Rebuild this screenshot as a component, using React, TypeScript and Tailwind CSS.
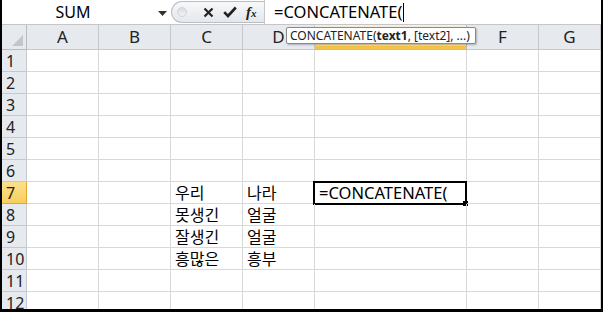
import React from "react";

const cols = [
  { name: "A", w: "w-[72px]" },
  { name: "B", w: "w-[72px]" },
  { name: "C", w: "w-[72px]" },
  { name: "D", w: "w-[72px]" },
  { name: "E", w: "w-[152px]" },
  { name: "F", w: "w-[72px]" },
  { name: "G", w: "flex-1" },
];

const data: Record<number, Record<string, string>> = {
  7: { C: "우리", D: "나라" },
  8: { C: "못생긴", D: "얼굴" },
  9: { C: "잘생긴", D: "얼굴" },
  10: { C: "흥많은", D: "흥부" },
};

const font = { fontFamily: '"Noto Sans", "Noto Sans CJK KR", sans-serif' };

function FormulaBar() {
  return (
    <div className="flex h-[25px] shrink-0 items-stretch border-b border-[#c6c6c6] bg-white">
      {/* Name box */}
      <div className="relative flex w-[169px] items-center">
        <span className="w-[142px] text-center text-[16px] text-black">SUM</span>
        <svg width="9" height="5" viewBox="0 0 9 5" className="absolute left-[156px] top-[11px]">
          <path d="M0 0 H9 L4.5 5 Z" fill="#333" />
        </svg>
      </div>
      {/* Buttons */}
      <div className="my-[1px] flex w-[93px] items-center rounded-l-full border border-r-0 border-[#b9bec6] bg-gradient-to-b from-[#f7f8fa] to-[#e4e7ec]">
        <div className="ml-[5px] h-[10px] w-[10px] rounded-full border border-[#d0d3d8] bg-gradient-to-b from-[#d8dbe0] to-[#f3f4f6]" />
        <svg width="11" height="11" viewBox="0 0 11 11" className="ml-[16px]">
          <path d="M1.5 1.5 L9.5 9.5 M9.5 1.5 L1.5 9.5" stroke="#222" strokeWidth="2.2" />
        </svg>
        <svg width="14" height="12" viewBox="0 0 14 12" className="ml-[9px]">
          <path d="M1.2 6.2 L5 10 L12.8 1.5" stroke="#222" strokeWidth="2.6" fill="none" />
        </svg>
        <span
          className="ml-[9px] text-[15px] font-bold italic text-[#222]"
          style={{ fontFamily: '"Liberation Serif", serif' }}
        >
          f<span className="text-[11px]">x</span>
        </span>
      </div>
      <div className="w-px bg-[#c6c6c6]" />
      {/* Formula input */}
      <div className="flex flex-1 items-center pl-[9px]">
        <span className="text-[16.5px] text-black">=CONCATENATE(</span>
        <span className="ml-px h-[19px] w-px bg-black" />
      </div>
    </div>
  );
}

function HeaderRow() {
  return (
    <div className="flex h-[25px] shrink-0">
      <div className="relative w-[25px] border-r border-b border-[#b8bcc2] bg-[#e6e9ee]">
        <svg width="11" height="11" viewBox="0 0 11 11" className="absolute bottom-[3px] right-[3px]">
          <path d="M11 0 V11 H0 Z" fill="#c3c7cd" />
        </svg>
      </div>
      {cols.map((c) => (
        <div
          key={c.name}
          className={`${c.w} relative flex items-center justify-center border-r border-b ${
            c.name === "E"
              ? "border-[#b8bcc2] border-b-[#f2b83c] bg-gradient-to-b from-[#f6f1e4] to-[#f5dc9c]"
              : "border-[#c5c9cf] bg-[#e6e9ee]"
          } text-[17px] text-[#222]`}
        >
          {c.name}
          {c.name === "E" && <div className="absolute bottom-0 left-0 right-0 h-[3px] bg-[#f5c445]" />}
        </div>
      ))}
    </div>
  );
}

function Row({ n }: { n: number }) {
  const active = n === 7;
  return (
    <div className="flex h-[22px] shrink-0">
      <div
        className={`flex w-[25px] items-center border-r border-b pl-[4px] text-[16px] ${
          active
            ? "border-[#e2a432] bg-gradient-to-b from-[#fbe08a] to-[#f8cf5c] text-[#222]"
            : "border-[#c5c9cf] bg-[#e6e9ee] text-[#222]"
        }`}
      >
        {n}
      </div>
      {cols.map((c) => (
        <div
          key={c.name}
          className={`${c.w} relative flex items-center border-r border-b border-[#d8d8d8] pl-[4px] text-[16px] text-black`}
        >
          {data[n]?.[c.name]}
          {active && c.name === "E" && (
            <div className="absolute -left-[2px] -top-px bottom-[-2px] right-[-1px] flex items-center border-2 border-black pl-[4px] text-[16.5px]">
              =CONCATENATE(
              <div className="absolute -bottom-[3px] -right-[3px] h-[5px] w-[5px] bg-black" />
            </div>
          )}
        </div>
      ))}
    </div>
  );
}

export default function App() {
  return (
    <div className="h-[312px] w-[603px] bg-black pl-[2px] pr-[2px] pb-[3px]" style={font}>
      <div className="relative flex h-full flex-col overflow-hidden bg-white">
        <FormulaBar />
        <HeaderRow />
        {Array.from({ length: 12 }, (_, i) => (
          <Row key={i} n={i + 1} />
        ))}
        {/* Function tooltip */}
        <div className="absolute left-[284px] top-[27px] flex h-[17px] w-[190px] items-center whitespace-nowrap rounded-[2px] border border-[#8a8a8a] bg-white pl-[3px] text-[12px] text-[#222] shadow-[1px_1px_2px_rgba(0,0,0,0.25)]">
          CONCATENATE(<b>text1</b>, [text2], ...)
        </div>
      </div>
    </div>
  );
}
